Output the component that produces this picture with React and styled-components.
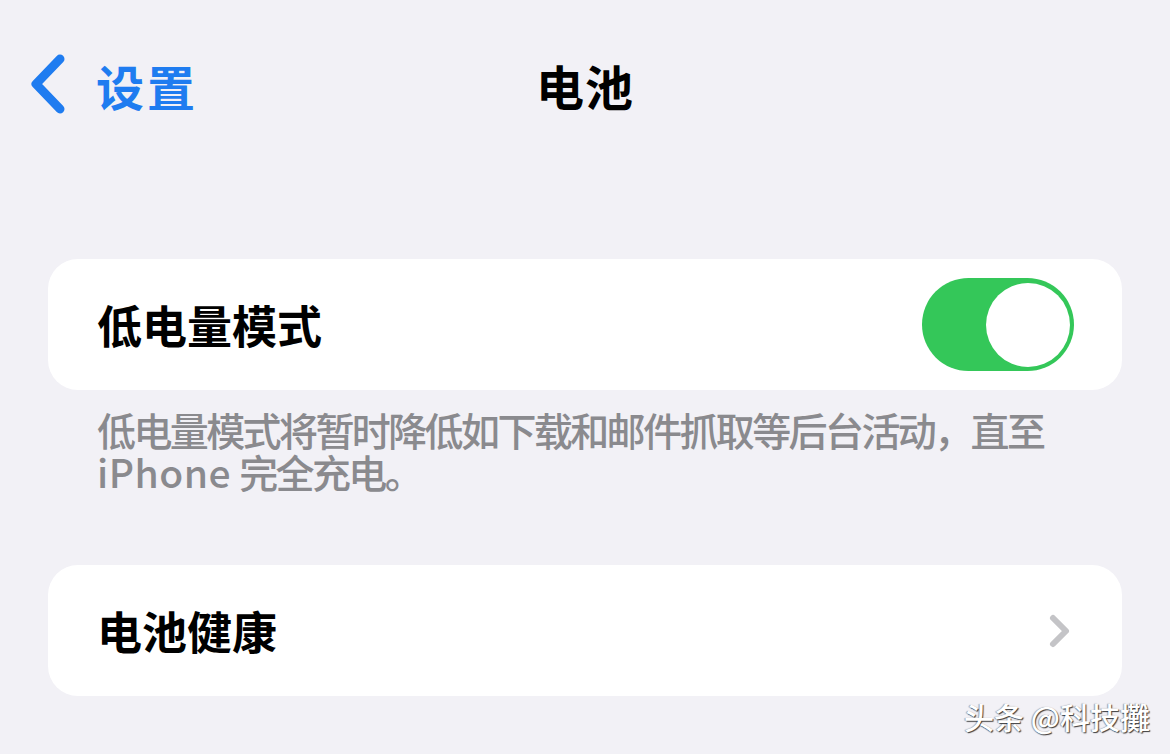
import React from "react";
import styled, { createGlobalStyle } from "styled-components";

const GlobalStyle = createGlobalStyle`
  html, body {
    margin: 0;
    padding: 0;
    background: #f2f1f6;
  }
  body {
    font-family: "Noto Sans CJK SC", "Noto Sans", sans-serif;
    -webkit-font-smoothing: antialiased;
  }
`;

const Screen = styled.div`
  width: 1170px;
  height: 754px;
  background: #f2f1f6;
  position: relative;
  overflow: hidden;
`;

const NavBar = styled.div`
  height: 170px;
  display: grid;
  grid-template-columns: 1fr auto 1fr;
  align-items: center;
`;

const BackButton = styled.div`
  display: flex;
  align-items: center;
  gap: 28px;
  padding-left: 28px;
  color: #1f7cf0;
  font-size: 48px;
  font-weight: 700;
  letter-spacing: 3px;
`;

const Title = styled.div`
  font-size: 48px;
  font-weight: 700;
  color: #000;
  letter-spacing: 1px;
`;

const Card = styled.div`
  margin: ${(p) => p.$top}px 48px 0;
  height: 131px;
  background: #fff;
  border-radius: 30px;
  display: flex;
  align-items: center;
  justify-content: space-between;
  padding: 0 48px 0 49px;
  box-sizing: border-box;
`;

const Label = styled.div`
  font-size: 45px;
  font-weight: 700;
  color: #000;
`;

const Toggle = styled.div`
  width: 152px;
  height: 93px;
  border-radius: 47px;
  background: #34c759;
  display: flex;
  align-items: center;
  justify-content: flex-end;
  padding: 0 4px;
  box-sizing: border-box;
`;

const Knob = styled.div`
  width: 84px;
  height: 84px;
  border-radius: 50%;
  background: #fff;
`;

const Footnote = styled.div`
  margin: 18px 0 0 97px;
  font-size: 39px;
  line-height: 42px;
  color: #8a8a8e;
  font-weight: 500;
  white-space: nowrap;
  letter-spacing: -2.6px;
`;

const Latin = styled.span`
  letter-spacing: 0.5px;
  margin-right: 8px;
`;

const Watermark = styled.div`
  position: absolute;
  right: 20px;
  bottom: 16px;
  font-size: 30px;
  font-weight: 500;
  color: #fff;
  text-shadow: 1px 1px 1px rgba(0, 0, 0, 0.75), -1px 0 1px rgba(0, 0, 0, 0.35);
`;

const BackChevron = () => (
  <svg width="40" height="64" viewBox="0 0 40 64">
    <path
      d="M32 6 L8 31 L32 56"
      fill="none"
      stroke="#1f7cf0"
      strokeWidth="9"
      strokeLinecap="round"
      strokeLinejoin="round"
    />
  </svg>
);

const RowChevron = () => (
  <svg width="24" height="36" viewBox="0 0 24 36" style={{ marginRight: 2 }}>
    <path
      d="M5 5 L18 18 L5 31"
      fill="none"
      stroke="#c4c4c7"
      strokeWidth="6"
      strokeLinecap="round"
      strokeLinejoin="round"
    />
  </svg>
);

export default function App() {
  return (
    <Screen>
      <GlobalStyle />
      <NavBar>
        <BackButton>
          <BackChevron />
          <span>设置</span>
        </BackButton>
        <Title>电池</Title>
        <div />
      </NavBar>

      <Card $top={89}>
        <Label>低电量模式</Label>
        <Toggle>
          <Knob />
        </Toggle>
      </Card>
      <Footnote>
        <div>低电量模式将暂时降低如下载和邮件抓取等后台活动，直至</div>
        <div>
          <Latin>iPhone</Latin>完全充电。
        </div>
      </Footnote>

      <Card $top={73}>
        <Label>电池健康</Label>
        <RowChevron />
      </Card>

      <Watermark>头条 @科技攤</Watermark>
    </Screen>
  );
}
